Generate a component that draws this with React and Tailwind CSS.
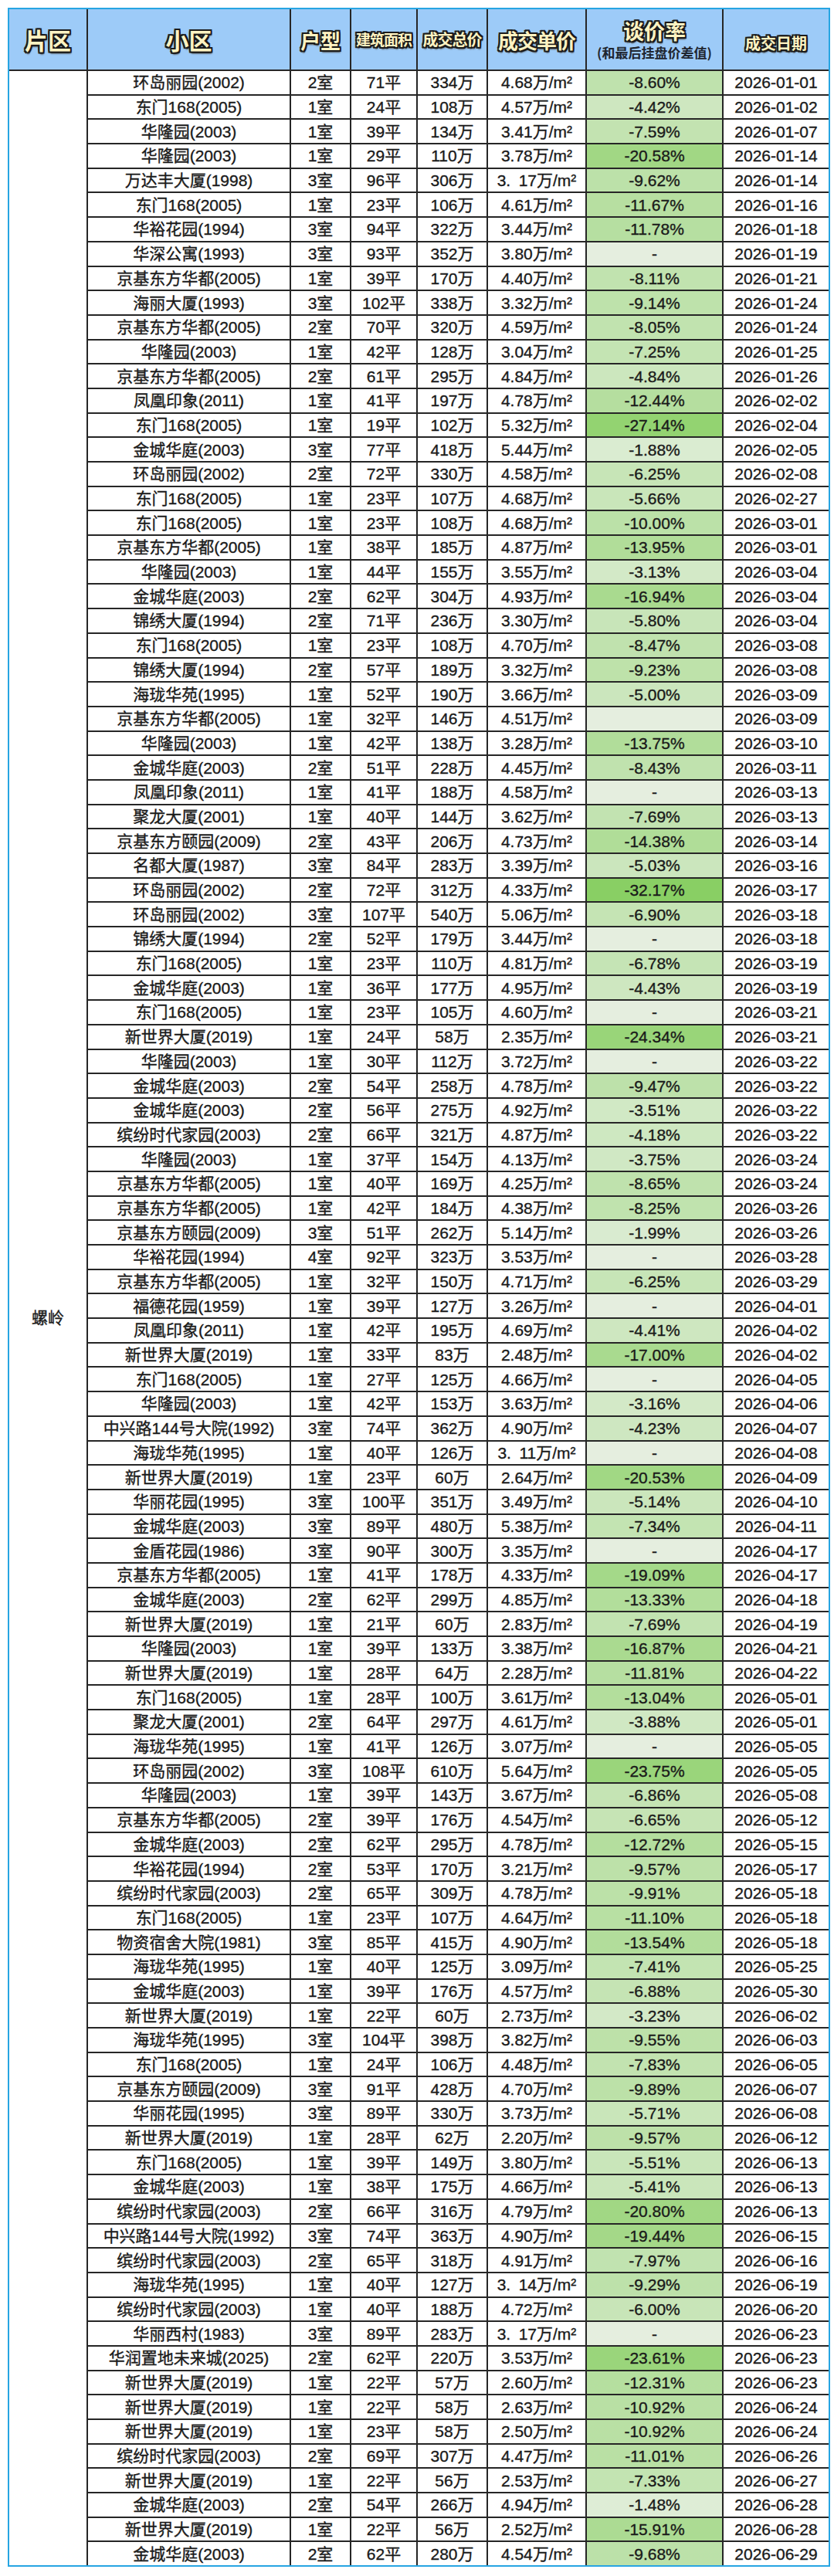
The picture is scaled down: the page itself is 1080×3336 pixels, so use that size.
import React from 'react';

// 成交记录：小区|户型|面积|总价|单价|谈价率|日期
const raw = `环岛丽园(2002)|2|71|334|4.68|-8.60|01-01
东门168(2005)|1|24|108|4.57|-4.42|01-02
华隆园(2003)|1|39|134|3.41|-7.59|01-07
华隆园(2003)|1|29|110|3.78|-20.58|01-14
万达丰大厦(1998)|3|96|306|3.\u200217|-9.62|01-14
东门168(2005)|1|23|106|4.61|-11.67|01-16
华裕花园(1994)|3|94|322|3.44|-11.78|01-18
华深公寓(1993)|3|93|352|3.80|-|01-19
京基东方华都(2005)|1|39|170|4.40|-8.11|01-21
海丽大厦(1993)|3|102|338|3.32|-9.14|01-24
京基东方华都(2005)|2|70|320|4.59|-8.05|01-24
华隆园(2003)|1|42|128|3.04|-7.25|01-25
京基东方华都(2005)|2|61|295|4.84|-4.84|01-26
凤凰印象(2011)|1|41|197|4.78|-12.44|02-02
东门168(2005)|1|19|102|5.32|-27.14|02-04
金城华庭(2003)|3|77|418|5.44|-1.88|02-05
环岛丽园(2002)|2|72|330|4.58|-6.25|02-08
东门168(2005)|1|23|107|4.68|-5.66|02-27
东门168(2005)|1|23|108|4.68|-10.00|03-01
京基东方华都(2005)|1|38|185|4.87|-13.95|03-01
华隆园(2003)|1|44|155|3.55|-3.13|03-04
金城华庭(2003)|2|62|304|4.93|-16.94|03-04
锦绣大厦(1994)|2|71|236|3.30|-5.80|03-04
东门168(2005)|1|23|108|4.70|-8.47|03-08
锦绣大厦(1994)|2|57|189|3.32|-9.23|03-08
海珑华苑(1995)|1|52|190|3.66|-5.00|03-09
京基东方华都(2005)|1|32|146|4.51||03-09
华隆园(2003)|1|42|138|3.28|-13.75|03-10
金城华庭(2003)|2|51|228|4.45|-8.43|03-11
凤凰印象(2011)|1|41|188|4.58|-|03-13
聚龙大厦(2001)|1|40|144|3.62|-7.69|03-13
京基东方颐园(2009)|2|43|206|4.73|-14.38|03-14
名都大厦(1987)|3|84|283|3.39|-5.03|03-16
环岛丽园(2002)|2|72|312|4.33|-32.17|03-17
环岛丽园(2002)|3|107|540|5.06|-6.90|03-18
锦绣大厦(1994)|2|52|179|3.44|-|03-18
东门168(2005)|1|23|110|4.81|-6.78|03-19
金城华庭(2003)|1|36|177|4.95|-4.43|03-19
东门168(2005)|1|23|105|4.60|-|03-21
新世界大厦(2019)|1|24|58|2.35|-24.34|03-21
华隆园(2003)|1|30|112|3.72|-|03-22
金城华庭(2003)|2|54|258|4.78|-9.47|03-22
金城华庭(2003)|2|56|275|4.92|-3.51|03-22
缤纷时代家园(2003)|2|66|321|4.87|-4.18|03-22
华隆园(2003)|1|37|154|4.13|-3.75|03-24
京基东方华都(2005)|1|40|169|4.25|-8.65|03-24
京基东方华都(2005)|1|42|184|4.38|-8.25|03-26
京基东方颐园(2009)|3|51|262|5.14|-1.99|03-26
华裕花园(1994)|4|92|323|3.53|-|03-28
京基东方华都(2005)|1|32|150|4.71|-6.25|03-29
福德花园(1959)|1|39|127|3.26|-|04-01
凤凰印象(2011)|1|42|195|4.69|-4.41|04-02
新世界大厦(2019)|1|33|83|2.48|-17.00|04-02
东门168(2005)|1|27|125|4.66|-|04-05
华隆园(2003)|1|42|153|3.63|-3.16|04-06
中兴路144号大院(1992)|3|74|362|4.90|-4.23|04-07
海珑华苑(1995)|1|40|126|3.\u200211|-|04-08
新世界大厦(2019)|1|23|60|2.64|-20.53|04-09
华丽花园(1995)|3|100|351|3.49|-5.14|04-10
金城华庭(2003)|3|89|480|5.38|-7.34|04-11
金盾花园(1986)|3|90|300|3.35|-|04-17
京基东方华都(2005)|1|41|178|4.33|-19.09|04-17
金城华庭(2003)|2|62|299|4.85|-13.33|04-18
新世界大厦(2019)|1|21|60|2.83|-7.69|04-19
华隆园(2003)|1|39|133|3.38|-16.87|04-21
新世界大厦(2019)|1|28|64|2.28|-11.81|04-22
东门168(2005)|1|28|100|3.61|-13.04|05-01
聚龙大厦(2001)|2|64|297|4.61|-3.88|05-01
海珑华苑(1995)|1|41|126|3.07|-|05-05
环岛丽园(2002)|3|108|610|5.64|-23.75|05-05
华隆园(2003)|1|39|143|3.67|-6.86|05-08
京基东方华都(2005)|2|39|176|4.54|-6.65|05-12
金城华庭(2003)|2|62|295|4.78|-12.72|05-15
华裕花园(1994)|2|53|170|3.21|-9.57|05-17
缤纷时代家园(2003)|2|65|309|4.78|-9.91|05-18
东门168(2005)|1|23|107|4.64|-11.10|05-18
物资宿舍大院(1981)|3|85|415|4.90|-13.54|05-18
海珑华苑(1995)|1|40|125|3.09|-7.41|05-25
金城华庭(2003)|1|39|176|4.57|-6.88|05-30
新世界大厦(2019)|1|22|60|2.73|-3.23|06-02
海珑华苑(1995)|3|104|398|3.82|-9.55|06-03
东门168(2005)|1|24|106|4.48|-7.83|06-05
京基东方颐园(2009)|3|91|428|4.70|-9.89|06-07
华丽花园(1995)|3|89|330|3.73|-5.71|06-08
新世界大厦(2019)|1|28|62|2.20|-9.57|06-12
东门168(2005)|1|39|149|3.80|-5.51|06-13
金城华庭(2003)|1|38|175|4.66|-5.41|06-13
缤纷时代家园(2003)|2|66|316|4.79|-20.80|06-13
中兴路144号大院(1992)|3|74|363|4.90|-19.44|06-15
缤纷时代家园(2003)|2|65|318|4.91|-7.97|06-16
海珑华苑(1995)|1|40|127|3.\u200214|-9.29|06-19
缤纷时代家园(2003)|1|40|188|4.72|-6.00|06-20
华丽西村(1983)|3|89|283|3.\u200217|-|06-23
华润置地未来城(2025)|2|62|220|3.53|-23.61|06-23
新世界大厦(2019)|1|22|57|2.60|-12.31|06-23
新世界大厦(2019)|1|22|58|2.63|-10.92|06-24
新世界大厦(2019)|1|23|58|2.50|-10.92|06-24
缤纷时代家园(2003)|2|69|307|4.47|-11.01|06-26
新世界大厦(2019)|1|22|56|2.53|-7.33|06-27
金城华庭(2003)|2|54|266|4.94|-1.48|06-28
新世界大厦(2019)|1|22|56|2.52|-15.91|06-28
金城华庭(2003)|2|62|280|4.54|-9.68|06-29`;

const rows = raw.split('\n').map((line) => {
  const [name, room, area, total, price, rate, date] = line.split('|');
  return { name, room, area, total, price, rate, date };
});

const FROM = [222, 237, 214];
const TO = [137, 207, 100];

// excel 色阶：越低越绿
function rateColor(rate) {
  if (rate === '-' || rate === '') return 'rgb(229,238,223)';
  const v = Math.abs(parseFloat(rate));
  const t = Math.pow(Math.min(Math.max((v - 1.48) / (32.17 - 1.48), 0), 1), 0.7);
  const c = FROM.map((a, i) => Math.round(a + (TO[i] - a) * t));
  return `rgb(${c.join(',')})`;
}

const outline =
  "text-[#fff3c2] font-bold [text-shadow:2px_0_0_#1b1b1b,-2px_0_0_#1b1b1b,0_2px_0_#1b1b1b,0_-2px_0_#1b1b1b,2px_2px_0_#1b1b1b,-2px_-2px_0_#1b1b1b,2px_-2px_0_#1b1b1b,-2px_2px_0_#1b1b1b,1px_3px_2px_#555]";

const cell = 'flex items-center justify-center border-r-2 border-[#262626] whitespace-pre';

const DataRow = ({ r }) => (
  <div className="flex h-[31.7px] border-t-2 border-[#262626] text-[21px] leading-none text-[#1a1a1a] [-webkit-text-stroke:0.35px_#1a1a1a]">
    <div className={`${cell} w-[263px]`}>{r.name}</div>
    <div className={`${cell} w-[78px]`}>{r.room}室</div>
    <div className={`${cell} w-[86px]`}>{r.area}平</div>
    <div className={`${cell} w-[91px]`}>{r.total}万</div>
    <div className={`${cell} w-[128px]`}>{r.price}万/m²</div>
    <div className={`${cell} w-[177px]`} style={{ backgroundColor: rateColor(r.rate) }}>
      {r.rate === '-' ? '-' : r.rate === '' ? '' : `${r.rate}%`}
    </div>
    <div className="flex w-[136px] items-center justify-center">2026-{r.date}</div>
  </div>
);

export default function App() {
  return (
    <div className="w-[1080px] h-[3336px] bg-white pt-[10px] pl-[10px] font-['Liberation_Sans','Noto_Sans_CJK_SC',sans-serif]">
      <div className="w-[1065px] border-2 border-[#27a5e2] bg-white">
        <div className="flex h-[78px] bg-[#9dcbf8] font-['Noto_Sans_CJK_SC',sans-serif]">
          <div className={`${cell} w-[102px] text-[30px] ${outline}`}>片区</div>
          <div className={`${cell} w-[263px] text-[30px] ${outline}`}>小区</div>
          <div className={`${cell} w-[78px] text-[26px] ${outline}`}>户型</div>
          <div className={`${cell} w-[86px] text-[19px] tracking-[-1px] ${outline}`}>建筑面积</div>
          <div className={`${cell} w-[91px] text-[20px] tracking-[-1px] ${outline}`}>成交总价</div>
          <div className={`${cell} w-[128px] text-[26px] tracking-[-1px] ${outline}`}>成交单价</div>
          <div className="flex w-[177px] flex-col items-center justify-center gap-[6px] border-r-2 border-[#262626]">
            <span className={`text-[27px] leading-none ${outline}`}>谈价率</span>
            <span className="text-[17px] font-bold leading-none text-[#1f2630]">(和最后挂盘价差值)</span>
          </div>
          <div className={`flex w-[136px] items-center justify-center pt-[10px] text-[20px] ${outline}`}>成交日期</div>
        </div>
        <div className="flex">
          <div className="flex w-[102px] items-center justify-center border-t-2 border-r-2 border-[#262626] text-[21px] text-[#1a1a1a] [-webkit-text-stroke:0.35px_#1a1a1a]">
            螺岭
          </div>
          <div className="flex flex-col">
            {rows.map((r, i) => (
              <DataRow key={i} r={r} />
            ))}
          </div>
        </div>
      </div>
    </div>
  );
}
